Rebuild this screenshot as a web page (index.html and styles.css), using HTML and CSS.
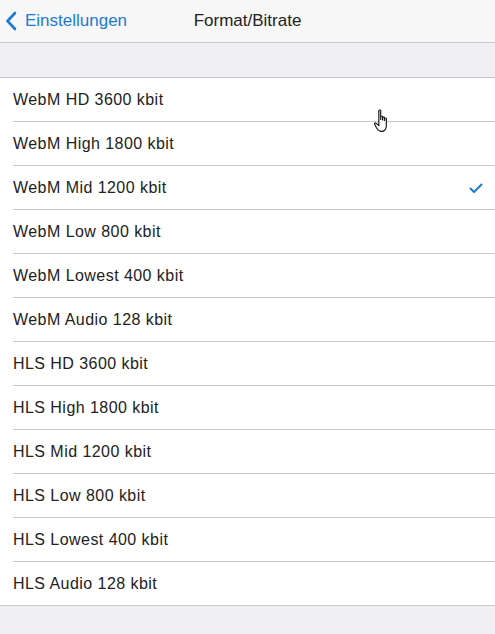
FILE: index.html
```html
<!DOCTYPE html>
<html lang="de">
  <head>
    <meta charset="UTF-8" />
    <meta name="viewport" content="width=device-width, initial-scale=1.0" />
    <title>Format/Bitrate</title>
    <link rel="stylesheet" href="styles.css">
  </head>
  <body>
    <div class="navbar">
      <a class="back" href="#">
        <svg class="chevron" width="12" height="20" viewBox="0 0 12 20">
          <path d="M10 2 L2.5 10 L10 18" fill="none" stroke="#1b7ad6" stroke-width="2.6" stroke-linecap="round" stroke-linejoin="round" />
        </svg>
        Einstellungen
      </a>
      <div class="title">Format/Bitrate</div>
    </div>
    <div class="spacer"></div>
    <ul class="list">
      <li>WebM HD 3600 kbit</li>
      <li>WebM High 1800 kbit</li>
      <li class="selected">WebM Mid 1200 kbit
        <svg class="check" width="14" height="11" viewBox="0 0 14 11">
          <path d="M1.5 5.5 L5 9 L12.5 1.5" fill="none" stroke="#1b7ad6" stroke-width="2" stroke-linecap="round" stroke-linejoin="round" />
        </svg>
      </li>
      <li>WebM Low 800 kbit</li>
      <li>WebM Lowest 400 kbit</li>
      <li>WebM Audio 128 kbit</li>
      <li>HLS HD 3600 kbit</li>
      <li>HLS High 1800 kbit</li>
      <li>HLS Mid 1200 kbit</li>
      <li>HLS Low 800 kbit</li>
      <li>HLS Lowest 400 kbit</li>
      <li>HLS Audio 128 kbit</li>
    </ul>
    <!-- mouse pointer from the screenshot -->
    <svg class="cursor" width="20" height="25" viewBox="0 0 18 24">
      <path d="M5 1.5 C5 0.8 6.8 0.8 6.8 1.5 L6.8 10 L6.8 7.5 C6.8 6.8 8.6 6.8 8.6 7.5 L8.6 10.5 L8.6 8.3 C8.6 7.6 10.4 7.6 10.4 8.3 L10.4 11 L10.4 9.2 C10.4 8.5 12.2 8.5 12.2 9.2 L12.2 15.5 C12.2 19 10.5 21.5 7.5 21.5 C5 21.5 3.8 20 2.6 17.8 L0.9 14.3 C0.5 13.5 1.6 12.8 2.3 13.5 L5 16 Z" fill="#fff" stroke="#111" stroke-width="1.1" stroke-linejoin="round" />
    </svg>
  </body>
</html>
```
FILE: styles.css
```css
body {
  margin: 0;
  font-family: Arial, "Liberation Sans", sans-serif;
  background-color: #efeff4;
  color: #222222;
  position: relative;
}

.navbar {
  height: 42px;
  display: flex;
  align-items: center;
  justify-content: center;
  position: relative;
  background-color: #f7f7f8;
  border-bottom: 1px solid #c8c7cc;
}

.back {
  position: absolute;
  left: 5px;
  top: 0;
  height: 42px;
  display: flex;
  align-items: center;
  gap: 8px;
  color: #1b7ad6;
  text-decoration: none;
  font-size: 17px;
}

.title {
  font-size: 17px;
  color: #222222;
}

.spacer {
  height: 34px;
  border-bottom: 1px solid #c8c7cc;
}

.list {
  list-style: none;
  margin: 0;
  padding: 0 0 0 13px;
  background-color: #ffffff;
  border-bottom: 1px solid #c8c7cc;
}

.list li {
  height: 42px;
  padding-top: 1px;
  display: flex;
  align-items: center;
  justify-content: space-between;
  padding-right: 12px;
  font-size: 16px;
  letter-spacing: 0.45px;
  border-bottom: 1px solid #c8c7cc;
}

.list li:last-child {
  border-bottom: none;
}

.cursor {
  position: absolute;
  left: 373px;
  top: 109px;
}
```
